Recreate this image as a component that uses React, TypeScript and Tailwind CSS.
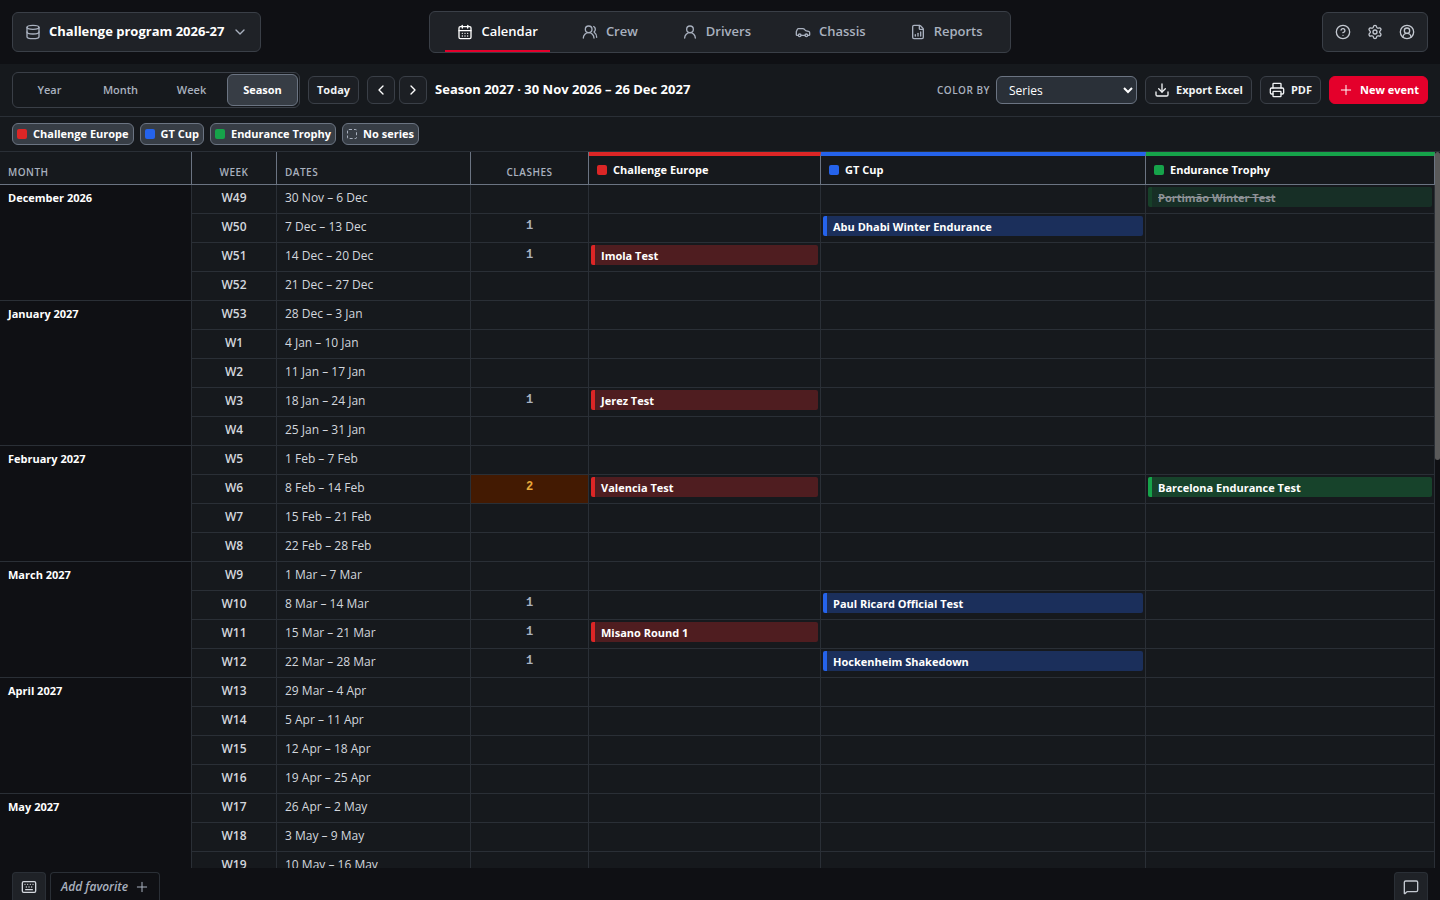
import { FC, ReactNode } from 'react';
import {
  CalendarDays,
  Car,
  ChevronDown,
  ChevronLeft,
  ChevronRight,
  CircleQuestionMark,
  CircleUserRound,
  Database,
  Download,
  FileChartColumnIncreasing,
  Keyboard,
  LucideIcon,
  MessageSquare,
  Plus,
  Printer,
  Settings,
  UserRound,
  UsersRound,
} from 'lucide-react';
import clsx from 'clsx';

type SeriesId = 'europe' | 'gt' | 'endurance';

type SeasonEvent = {
  series: SeriesId;
  name: string;
  cancelled?: boolean;
};

type Week = {
  week: string;
  dates: string;
  clashes?: number;
  events?: SeasonEvent[];
};

type Month = {
  name: string;
  weeks: Week[];
};

const series: { id: SeriesId; name: string; dot: string; top: string }[] = [
  { id: 'europe', name: 'Challenge Europe', dot: 'bg-[#dc2626]', top: 'border-t-[#dc2626]' },
  { id: 'gt', name: 'GT Cup', dot: 'bg-[#2563eb]', top: 'border-t-[#2563eb]' },
  { id: 'endurance', name: 'Endurance Trophy', dot: 'bg-[#16a34a]', top: 'border-t-[#16a34a]' },
];

const eventColors: Record<SeriesId, string> = {
  europe: 'border-[#dc2626] bg-[#4f1d20]',
  gt: 'border-[#2563eb] bg-[#1b2f5b]',
  endurance: 'border-[#16a34a] bg-[#17432b]',
};

const months: Month[] = [
  {
    name: 'December 2026',
    weeks: [
      {
        week: 'W49',
        dates: '30 Nov – 6 Dec',
        events: [{ series: 'endurance', name: 'Portimão Winter Test', cancelled: true }],
      },
      {
        week: 'W50',
        dates: '7 Dec – 13 Dec',
        clashes: 1,
        events: [{ series: 'gt', name: 'Abu Dhabi Winter Endurance' }],
      },
      {
        week: 'W51',
        dates: '14 Dec – 20 Dec',
        clashes: 1,
        events: [{ series: 'europe', name: 'Imola Test' }],
      },
      { week: 'W52', dates: '21 Dec – 27 Dec' },
    ],
  },
  {
    name: 'January 2027',
    weeks: [
      { week: 'W53', dates: '28 Dec – 3 Jan' },
      { week: 'W1', dates: '4 Jan – 10 Jan' },
      { week: 'W2', dates: '11 Jan – 17 Jan' },
      {
        week: 'W3',
        dates: '18 Jan – 24 Jan',
        clashes: 1,
        events: [{ series: 'europe', name: 'Jerez Test' }],
      },
      { week: 'W4', dates: '25 Jan – 31 Jan' },
    ],
  },
  {
    name: 'February 2027',
    weeks: [
      { week: 'W5', dates: '1 Feb – 7 Feb' },
      {
        week: 'W6',
        dates: '8 Feb – 14 Feb',
        clashes: 2,
        events: [
          { series: 'europe', name: 'Valencia Test' },
          { series: 'endurance', name: 'Barcelona Endurance Test' },
        ],
      },
      { week: 'W7', dates: '15 Feb – 21 Feb' },
      { week: 'W8', dates: '22 Feb – 28 Feb' },
    ],
  },
  {
    name: 'March 2027',
    weeks: [
      { week: 'W9', dates: '1 Mar – 7 Mar' },
      {
        week: 'W10',
        dates: '8 Mar – 14 Mar',
        clashes: 1,
        events: [{ series: 'gt', name: 'Paul Ricard Official Test' }],
      },
      {
        week: 'W11',
        dates: '15 Mar – 21 Mar',
        clashes: 1,
        events: [{ series: 'europe', name: 'Misano Round 1' }],
      },
      {
        week: 'W12',
        dates: '22 Mar – 28 Mar',
        clashes: 1,
        events: [{ series: 'gt', name: 'Hockenheim Shakedown' }],
      },
    ],
  },
  {
    name: 'April 2027',
    weeks: [
      { week: 'W13', dates: '29 Mar – 4 Apr' },
      { week: 'W14', dates: '5 Apr – 11 Apr' },
      { week: 'W15', dates: '12 Apr – 18 Apr' },
      { week: 'W16', dates: '19 Apr – 25 Apr' },
    ],
  },
  {
    name: 'May 2027',
    weeks: [
      { week: 'W17', dates: '26 Apr – 2 May' },
      { week: 'W18', dates: '3 May – 9 May' },
      { week: 'W19', dates: '10 May – 16 May' },
    ],
  },
];

const navItems: { label: string; icon: LucideIcon }[] = [
  { label: 'Calendar', icon: CalendarDays },
  { label: 'Crew', icon: UsersRound },
  { label: 'Drivers', icon: UserRound },
  { label: 'Chassis', icon: Car },
  { label: 'Reports', icon: FileChartColumnIncreasing },
];

const userActions: { label: string; icon: LucideIcon }[] = [
  { label: 'Help', icon: CircleQuestionMark },
  { label: 'Settings', icon: Settings },
  { label: 'Account', icon: CircleUserRound },
];

const ToolButton: FC<{ children: ReactNode; className?: string; label?: string }> = ({
  children,
  className,
  label,
}) => (
  <button
    type="button"
    aria-label={label}
    className={clsx(
      'flex h-7 items-center justify-center gap-[6px] rounded-md border text-[11px] font-bold',
      className ?? 'border-[#3a3f47] bg-[#1c1f24] px-2 text-[#f1f3f5]',
    )}
  >
    {children}
  </button>
);

const Header: FC = () => (
  <header className="grid h-16 shrink-0 grid-cols-[1fr_auto_1fr] items-center bg-[#0f1014] px-3">
    <button
      type="button"
      className="flex h-10 items-center gap-2 justify-self-start rounded-md border border-[#3a3f47] bg-[#1f2227] px-3 text-[13px] font-bold text-white"
    >
      <Database size={16} className="text-[#a9b1bf]" />
      Challenge program 2026-27
      <ChevronDown size={16} className="text-[#a9b1bf]" />
    </button>

    <nav className="flex h-[42px] gap-5 rounded-md border border-[#3a3f47] bg-[#1f2227] px-[15px]">
      {navItems.map(({ label, icon: Icon }, i) => (
        <a
          key={label}
          href="#"
          className={clsx(
            'flex items-center gap-2 border-y-2 border-t-transparent px-3 text-[13px] font-semibold',
            i === 0 ? 'border-b-[#e4002b] text-white' : 'border-b-transparent text-[#a9b1bf]',
          )}
        >
          <Icon size={16} />
          {label}
        </a>
      ))}
    </nav>

    <div className="flex h-10 items-center justify-self-end rounded-md border border-[#3a3f47] bg-[#1f2227] px-1 text-[#c3c8d0]">
      {userActions.map(({ label, icon: Icon }) => (
        <button
          key={label}
          type="button"
          aria-label={label}
          className="flex size-8 items-center justify-center"
        >
          <Icon size={16} />
        </button>
      ))}
    </div>
  </header>
);

const Toolbar: FC = () => (
  <div className="flex h-[53px] shrink-0 items-center border-b border-[#2a2f36] px-3">
    <div className="flex h-9 items-center rounded-md border border-[#3a3f47] p-px">
      {['Year', 'Month', 'Week', 'Season'].map((view) => (
        <button
          key={view}
          type="button"
          className={clsx(
            'h-8 w-[71px] rounded-md border text-[11px]',
            view === 'Season'
              ? 'border-[#6b7482] bg-[#373d45] font-bold text-white'
              : 'border-transparent font-semibold text-[#a9b1bf]',
          )}
        >
          {view}
        </button>
      ))}
    </div>
    <div className="ml-2 flex gap-2">
      <ToolButton>Today</ToolButton>
      <div className="flex gap-1">
        <ToolButton label="Previous season" className="w-7 border-[#3a3f47] bg-[#1c1f24] text-white">
          <ChevronLeft size={16} />
        </ToolButton>
        <ToolButton label="Next season" className="w-7 border-[#3a3f47] bg-[#1c1f24] text-white">
          <ChevronRight size={16} />
        </ToolButton>
      </div>
    </div>
    <h1 className="ml-2 text-[13px] font-bold text-white">
      Season 2027 · 30 Nov 2026 – 26 Dec 2027
    </h1>

    <div className="ml-auto flex items-center gap-2">
      <div className="flex items-center gap-[6px]">
        <label
          htmlFor="color-by"
          className="text-[10px] font-semibold tracking-wider text-[#a9b1bf]"
        >
          COLOR BY
        </label>
        <select
          id="color-by"
          defaultValue="series"
          className="h-7 w-[141px] rounded-md border border-[#6b7482] bg-[#2a3038] px-2 text-xs text-white"
        >
          <option value="series">Series</option>
          <option value="status">Status</option>
        </select>
      </div>
      <ToolButton>
        <Download size={16} />
        Export Excel
      </ToolButton>
      <ToolButton>
        <Printer size={16} />
        PDF
      </ToolButton>
      <ToolButton className="border-[#e4002b] bg-[#e4002b] px-2 text-white">
        <Plus size={16} strokeWidth={1.5} />
        New event
      </ToolButton>
    </div>
  </div>
);

const chipClass =
  'flex h-[22px] items-center gap-[6px] rounded-md border border-[#6b7482] bg-[#373d45] px-1 text-[11px] font-bold text-white';

const SeriesFilter: FC = () => (
  <div className="flex h-[35px] shrink-0 items-center gap-[6px] border-b border-[#2a2f36] px-3">
    {series.map((s) => (
      <button key={s.id} type="button" className={chipClass}>
        <span className={clsx('size-[10px] rounded-xs', s.dot)} />
        {s.name}
      </button>
    ))}
    <button type="button" className={chipClass}>
      <span className="size-[10px] rounded-xs border border-dashed border-[#a9b1bf]" />
      No series
    </button>
  </div>
);

const EventBar: FC<{ event: SeasonEvent }> = ({ event }) => (
  <div
    className={clsx(
      'h-5 truncate rounded-xs border-l-4 pl-[6px] text-[11px] font-bold leading-[21px]',
      event.cancelled
        ? 'border-[#174029] bg-[#172f26] text-[#8d9196] line-through'
        : [eventColors[event.series], 'text-white'],
    )}
  >
    {event.name}
  </div>
);

const headCell = 'border-r border-b border-[#6b7482] px-2 font-semibold';
const bodyCell = 'h-[29px] border-r border-b border-[#2a2f36] align-top leading-4';

const SeasonTable: FC = () => (
  <table className="w-full table-fixed border-separate border-spacing-0 text-xs">
    <colgroup>
      <col className="w-[192px]" />
      <col className="w-[85px]" />
      <col className="w-[194px]" />
      <col className="w-[118px]" />
      <col className="w-[232px]" />
      <col className="w-[325px]" />
      <col className="w-[289px]" />
    </colgroup>
    <thead>
      <tr className="h-[33px] text-left text-[#a9b1bf]">
        {['MONTH', 'WEEK', 'DATES', 'CLASHES'].map((title) => (
          <th
            key={title}
            className={clsx(
              headCell,
              'pt-[10px] text-[10px] tracking-wider',
              (title === 'WEEK' || title === 'CLASHES') && 'text-center',
            )}
          >
            {title}
          </th>
        ))}
        {series.map((s) => (
          <th
            key={s.id}
            className={clsx(headCell, 'border-t-4 text-[11px] text-white', s.top)}
          >
            <span className="flex items-center gap-[6px] font-bold">
              <span className={clsx('size-[10px] rounded-xs', s.dot)} />
              {s.name}
            </span>
          </th>
        ))}
      </tr>
    </thead>
    <tbody>
      {months.map((month) =>
        month.weeks.map((week, i) => (
          <tr key={week.week}>
            {i === 0 && (
              <th
                rowSpan={month.weeks.length}
                className={clsx(
                  bodyCell,
                  'bg-[#0f1014] px-2 pt-[5px] text-left text-[11px] font-bold text-white',
                )}
              >
                {month.name}
              </th>
            )}
            <td className={clsx(bodyCell, 'pt-[5px] text-center font-semibold text-[#d3d7dd]')}>
              {week.week}
            </td>
            <td className={clsx(bodyCell, 'px-2 pt-[5px] text-[#d3d7dd]')}>{week.dates}</td>
            <td
              className={clsx(
                bodyCell,
                "pt-1 text-center font-['Liberation_Mono',monospace] font-bold",
                (week.clashes ?? 0) > 1 ? 'bg-[#431a02] text-[#e8a93a]' : 'text-[#a9b1bf]',
              )}
            >
              {week.clashes}
            </td>
            {series.map((s) => {
              const event = week.events?.find((e) => e.series === s.id);
              return (
                <td key={s.id} className={clsx(bodyCell, 'p-[2px]')}>
                  {event && <EventBar event={event} />}
                </td>
              );
            })}
          </tr>
        )),
      )}
    </tbody>
  </table>
);

const Footer: FC = () => (
  <footer className="flex h-8 shrink-0 items-end gap-1 bg-[#0f1014] px-3">
    <button
      type="button"
      aria-label="Keyboard shortcuts"
      className="flex h-7 w-[34px] items-center justify-center rounded-t-sm border border-b-0 border-[#2a2f36] bg-[#1f2227] text-[#d3d7dd]"
    >
      <Keyboard size={16} />
    </button>
    <button
      type="button"
      className="flex h-7 items-center gap-[6px] rounded-t-sm border border-b-0 border-[#2a2f36] pr-[9px] pl-[10px] text-xs font-semibold text-[#a9b1bf] italic"
    >
      Add favorite
      <Plus size={16} strokeWidth={1.5} />
    </button>
    <button
      type="button"
      aria-label="Feedback"
      className="ml-auto flex h-7 w-[34px] items-center justify-center rounded-t-sm border border-b-0 border-[#2a2f36] bg-[#1f2227] text-[#c3c8d0]"
    >
      <MessageSquare size={16} />
    </button>
  </footer>
);

export default function App() {
  return (
    <div className="flex h-screen flex-col bg-[#16191d] font-['Open_Sans',sans-serif]">
      <Header />
      <Toolbar />
      <SeriesFilter />
      <main className="flex min-h-0 flex-1">
        <div className="flex-1 overflow-y-auto [scrollbar-width:none]">
          <SeasonTable />
        </div>
        {/* scroll track */}
        <div className="w-[5px] bg-[#0f1014]">
          <div className="h-[43%] rounded-full bg-[#5a5a5a]" />
        </div>
      </main>
      <Footer />
    </div>
  );
}
